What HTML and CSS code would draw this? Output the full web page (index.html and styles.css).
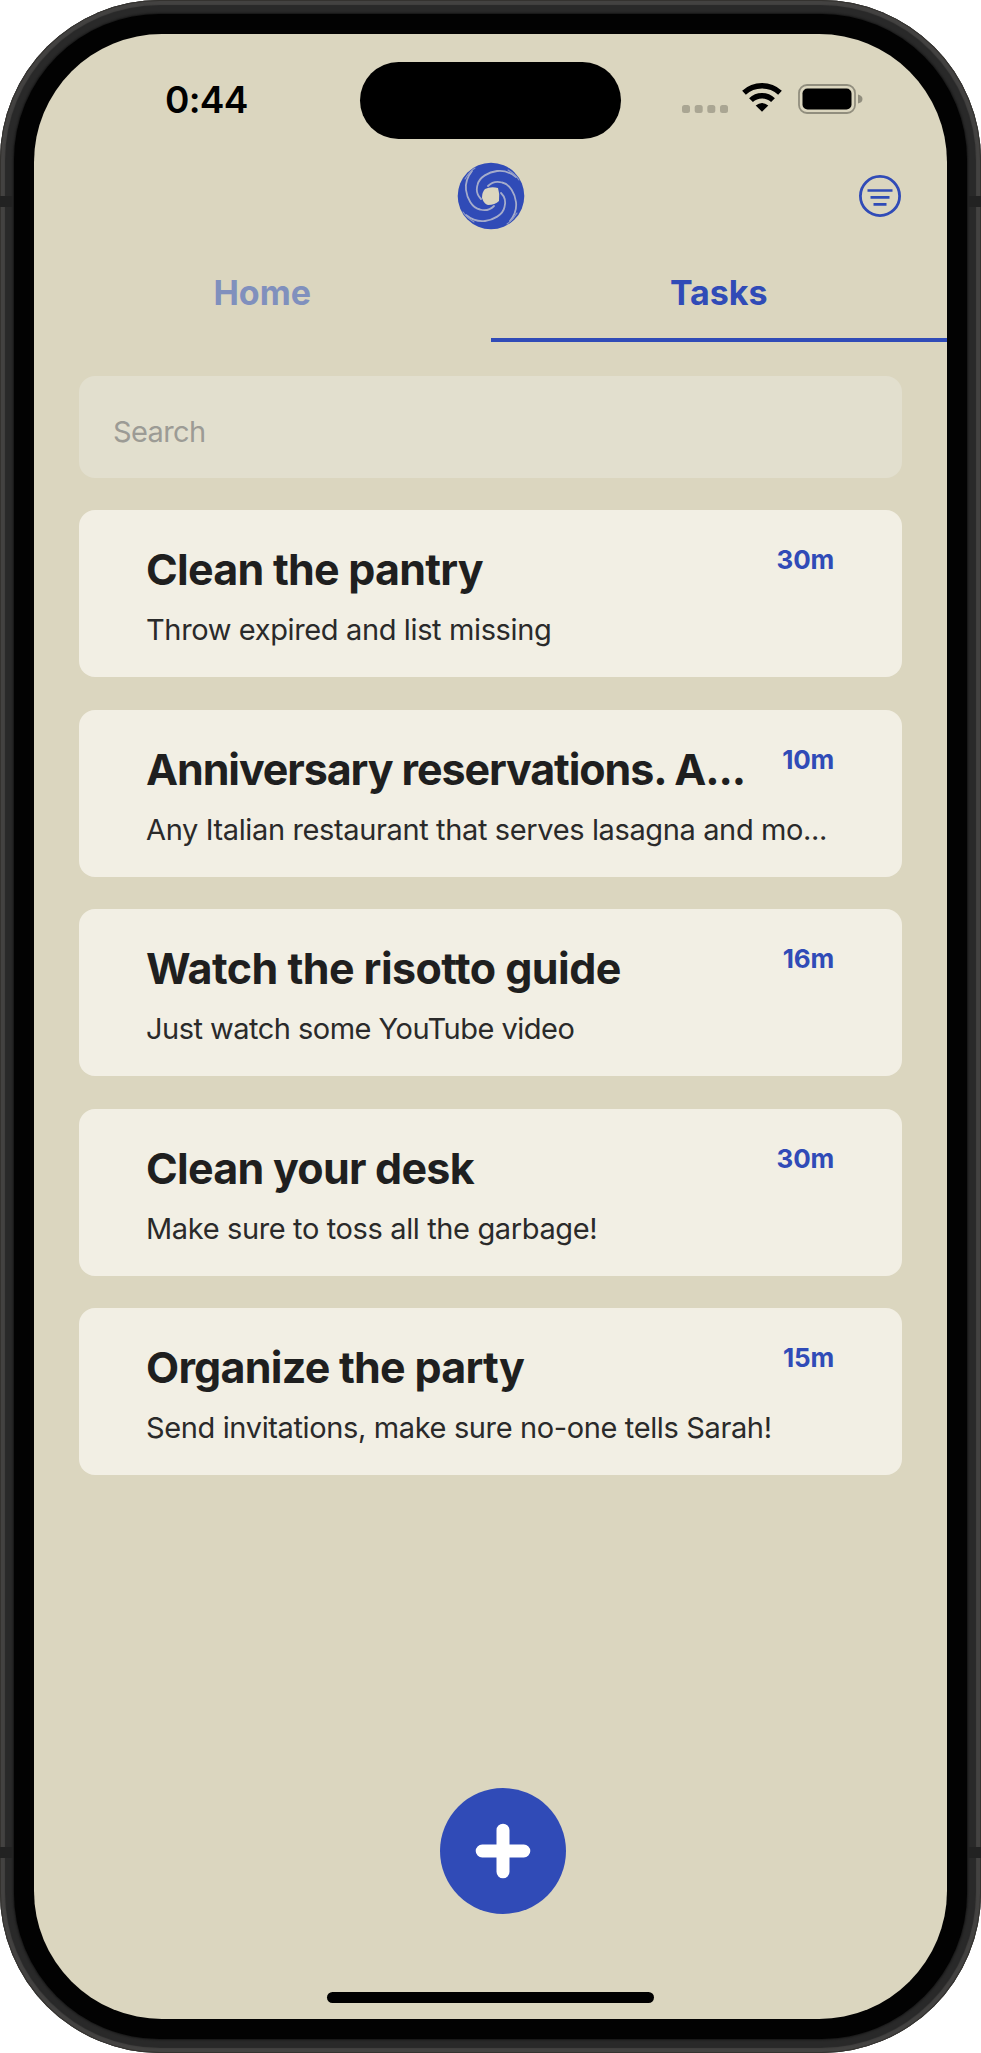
FILE: index.html
```html
<!DOCTYPE html>
<html lang="en">
<head>
<meta charset="utf-8">
<title>Tasks</title>
<link rel="stylesheet" href="styles.css">
</head>
<body>
<div class="phone">
  <div class="bezel">
    <div class="screen">
      <header class="status">
        <span class="clock">0:44</span>
        <span class="island"></span>
        <span class="indicators">
          <svg class="dots" width="46" height="8" viewBox="0 0 46 8"><g fill="#aaa693"><rect width="8" height="8" rx="2.5"/><rect x="12.7" width="8" height="8" rx="2.5"/><rect x="25.3" width="8" height="8" rx="2.5"/><rect x="38" width="8" height="8" rx="2.5"/></g></svg>
          <svg class="wifi" width="40" height="29" viewBox="0 0 40 29"><g fill="none" stroke="#000" stroke-width="5.4"><path d="M2 9.8C12 .4 28 .4 38 9.8"/><path d="M9 17.2C15 11.2 25 11.2 31 17.2"/></g><path d="M13.7 22.4Q20 17.4 26.3 22.4L20 28.8Z"/></svg>
          <svg class="battery" width="66" height="30" viewBox="0 0 66 30"><rect x="1" y="1" width="56" height="28" rx="8" fill="none" stroke="#918e7e" stroke-width="1.8"/><rect x="4.5" y="4.5" width="49" height="21" rx="5"/><path d="M60 10.5Q64.5 11.5 64.5 15T60 19.5Z" fill="#918e7e"/></svg>
        </span>
      </header>
      <div class="brandbar">
        <svg class="logo" width="68" height="68" viewBox="-34 -34 68 68">
          <circle r="33.3" fill="#304bb7"/>
          <path d="M-6-7Q0-10 7-8Q9-2 8 5Q4 9-3 9Q-7 8-9 2Q-9-4-6-7Z" fill="#dbd6bf"/>
          <g fill="none" stroke="#a5accb" stroke-width="1.8" stroke-linecap="round">
            <path id="arm" d="M3 10C-1 14-6 15-11 13.5C-19 12-24 2-25-6C-26-14-23-20-19-25"/>
            <use href="#arm" transform="rotate(90)"/><use href="#arm" transform="rotate(180)"/><use href="#arm" transform="rotate(270)"/>
          </g>
          <g fill="none" stroke="#8e99c6" stroke-width="1.1" stroke-linecap="round">
            <path id="tip" d="M-26-17Q-22-24-16-28"/>
            <use href="#tip" transform="rotate(90)"/><use href="#tip" transform="rotate(180)"/><use href="#tip" transform="rotate(270)"/>
          </g>
        </svg>
        <svg class="filter" width="44" height="44" viewBox="0 0 44 44"><g fill="none" stroke="#304bb7"><circle cx="22" cy="22" r="19.6" stroke-width="2.8"/><path d="M9.5 16.5h25M12.5 23.4h19M15.5 30.3h13" stroke-width="2.7"/></g></svg>
      </div>
      <nav class="tabs">
        <a class="tab">Home</a>
        <a class="tab tab-active">Tasks</a>
      </nav>
      <main class="content">
        <div class="search">Search</div>
        <article class="card"><div class="row"><h2 class="title">Clean the pantry</h2><span class="time">30m</span></div><p class="desc">Throw expired and list missing</p></article>
        <article class="card"><div class="row"><h2 class="title title-long">Anniversary reservations. A...</h2><span class="time">10m</span></div><p class="desc">Any Italian restaurant that serves lasagna and mo...</p></article>
        <article class="card"><div class="row"><h2 class="title title-open">Watch the risotto guide</h2><span class="time">16m</span></div><p class="desc desc-tight">Just watch some YouTube video</p></article>
        <article class="card"><div class="row"><h2 class="title">Clean your desk</h2><span class="time">30m</span></div><p class="desc">Make sure to toss all the garbage!</p></article>
        <article class="card"><div class="row"><h2 class="title">Organize the party</h2><span class="time">15m</span></div><p class="desc">Send invitations, make sure no-one tells Sarah!</p></article>
      </main>
      <footer class="bottom">
        <button class="add" aria-label="Add task"><svg width="56" height="56" viewBox="0 0 56 56"><path d="M28 7.2v41.6M7.2 28h41.6" stroke="#fff" stroke-width="13" stroke-linecap="round"/></svg></button>
        <span class="home-indicator"></span>
      </footer>
    </div>
  </div>
  <span class="antenna antenna-top"></span>
  <span class="antenna antenna-low"></span>
</div>
</body>
</html>
```
FILE: styles.css
```css
* { box-sizing: border-box; }
body { margin: 0; background: #fff; font-family: Inter, "Liberation Sans", sans-serif; font-variant-ligatures: none; }
.phone {
  position: relative;
  width: 981px; height: 2053px; padding: 14px; border-radius: 160px;
  background: #292929;
  box-shadow: inset 0 0 0 1px #34322f, inset 0 0 1px 5px #434241;
}
/* Antenna bands crossing the metal rim on both sides */
.antenna { position: absolute; left: 0; right: 0; height: 11px; border: solid #222; border-width: 0 13px; }
.antenna-top { top: 196px; }
.antenna-low { top: 1847px; }
.bezel { height: 100%; padding: 20px; border-radius: 146px; background: #020202; box-shadow: 0 0 2px 1px #151515; }
.screen {
  display: flex; flex-direction: column; height: 1985px; overflow: hidden;
  border-radius: 128px; background: #dbd6bf; color: #1f1f1f;
}
.status { display: grid; grid-template-columns: 326px 261px 1fr; height: 117px; padding-top: 28px; flex: none; }
.clock { padding: 15px 0 0 131px; font-size: 37px; line-height: 46px; font-weight: 600; color: #000; letter-spacing: -.7px; }
.island { height: 77px; border-radius: 39px; background: #000; }
.indicators { display: flex; padding: 21px 0 0 61px; }
.dots { margin-top: 22px; }
.wifi { margin-left: 14px; }
.battery { margin-left: 16px; margin-top: 1px; }
.brandbar { display: grid; grid-template-columns: 1fr 68px 1fr; height: 94px; padding-top: 11px; flex: none; }
.logo { grid-column: 2; }
.filter { justify-self: end; margin: 12px 45px 0 0; }
.tabs { display: grid; grid-template-columns: 1fr 1fr; height: 97px; flex: none; }
.tab { padding-top: 27px; border-bottom: 4px solid transparent; text-align: center; font-size: 34px; line-height: 42px; font-weight: 650; color: #8090bd; }
.tab-active { color: #304bb7; border-color: #304bb7; }
.content { display: grid; grid-template-columns: minmax(0, 1fr); row-gap: 32.5px; padding: 33.5px 45px 0 45px; }
.search { height: 102px; padding: 38px 34px 0; border-radius: 16px; background: #e2dfce; color: #9c9b95; font-size: 29px; line-height: 35px; letter-spacing: -.6px; }
.card { height: 167px; padding: 32px 68px 0 67px; border-radius: 16px; background: #f2efe4; }
.row { display: flex; justify-content: space-between; height: 56px; white-space: nowrap; }
.title { margin: 0; padding-top: 1px; font-size: 43px; line-height: 52px; font-weight: 700; letter-spacing: -.75px; }
.title-long { letter-spacing: -1.1px; }
.title-open { letter-spacing: -.55px; }
.time { font-size: 26px; line-height: 35px; font-weight: 650; color: #304bb7; letter-spacing: -.2px; }
.desc { margin: 14px 0 0; font-size: 29px; line-height: 36px; white-space: nowrap; color: #2a2a2a; letter-spacing: -.37px; }
.desc-tight { letter-spacing: -.52px; }
.bottom { display: flex; flex-direction: column; align-items: center; margin-top: auto; padding-bottom: 16px; }
.add { display: grid; place-items: center; width: 126px; height: 126px; margin: 0 0 78px 25px; padding: 0; border: 0; border-radius: 50%; background: #304bb7; }
.home-indicator { width: 327px; height: 11.5px; border-radius: 6px; background: #000; }
```
